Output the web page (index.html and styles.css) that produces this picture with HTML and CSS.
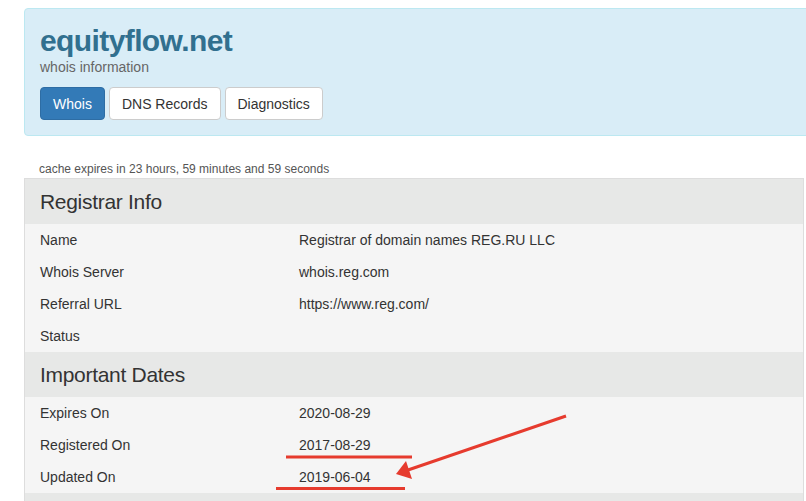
FILE: index.html
```html
<!DOCTYPE html>
<html>
<head>
<meta charset="utf-8">
<link rel="stylesheet" href="styles.css">
</head>
<body>
<div class="page">
  <div class="jumbo">
    <h1 class="title">equityflow.net</h1>
    <p class="subtitle">whois information</p>
    <div class="tabs">
      <span class="btn active">Whois</span>
      <span class="btn">DNS Records</span>
      <span class="btn">Diagnostics</span>
    </div>
  </div>
  <p class="cache">cache expires in 23 hours, 59 minutes and 59 seconds</p>
  <div class="table">
    <div class="head">Registrar Info</div>
    <div class="row"><span class="k">Name</span><span class="v">Registrar of domain names REG.RU LLC</span></div>
    <div class="row"><span class="k">Whois Server</span><span class="v">whois.reg.com</span></div>
    <div class="row"><span class="k">Referral URL</span><span class="v">https://www.reg.com/</span></div>
    <div class="row"><span class="k">Status</span><span class="v"></span></div>
    <div class="head">Important Dates</div>
    <div class="row"><span class="k">Expires On</span><span class="v">2020-08-29</span></div>
    <div class="row"><span class="k">Registered On</span><span class="v">2017-08-29</span></div>
    <div class="row"><span class="k">Updated On</span><span class="v">2019-06-04</span></div>
    <div class="head">&nbsp;</div>
  </div>
</div>
<svg class="annot" width="806" height="501" viewBox="0 0 806 501">
  <line x1="286" y1="457" x2="412" y2="457" stroke="#e63b2e" stroke-width="3"/>
  <line x1="276" y1="488.5" x2="405" y2="488.5" stroke="#e63b2e" stroke-width="3"/>
  <line x1="566" y1="416" x2="408" y2="470" stroke="#e63b2e" stroke-width="3"/>
  <polygon points="396,474 406,461 412,479" fill="#e63b2e"/>
</svg>
</body>
</html>
```

FILE: styles.css
```css
html, body {
  margin: 0;
  padding: 0;
  overflow: hidden;
  background: #fff;
}
body {
  font-family: "Liberation Sans", Arial, sans-serif;
  color: #333;
  font-size: 14px;
  width: 806px;
  height: 501px;
  position: relative;
}
.page {
  padding: 8px 0 0 24px;
}
.jumbo {
  width: 800px;
  box-sizing: border-box;
  background: #d9edf7;
  border: 1px solid #bce8f1;
  border-radius: 4px;
  padding: 15px 15px 15px 15px;
}
.title {
  margin: 0;
  font-size: 30px;
  line-height: 33px;
  font-weight: bold;
  color: #31708f;
  letter-spacing: -0.6px;
}
.subtitle {
  margin: 0;
  font-size: 14px;
  line-height: 20px;
  color: #666;
}
.tabs {
  margin-top: 10px;
  display: flex;
  gap: 4px;
}
.btn {
  display: inline-block;
  padding: 6px 12px 5px;
  line-height: 20px;
  font-size: 14px;
  border: 1px solid #ccc;
  border-radius: 4px;
  background: #fff;
  color: #333;
}
.btn.active {
  background: #337ab7;
  border-color: #2e6da4;
  color: #fff;
}
.cache {
  margin: 24px 0 0 15px;
  font-size: 12px;
  line-height: 18px;
  color: #555;
}
.table {
  width: 780px;
  box-sizing: border-box;
  border: 1px solid #ddd;
  border-bottom: none;
}
.head {
  background: #e7e8e7;
  height: 45px;
  line-height: 46px;
  padding-left: 15px;
  font-size: 21px;
  letter-spacing: -0.3px;
  color: #333;
}
.row {
  background: #f5f5f5;
  height: 32px;
  display: flex;
  align-items: center;
  padding-left: 15px;
}
.k {
  width: 259px;
}
.annot {
  position: absolute;
  left: 0;
  top: 0;
  pointer-events: none;
}
```
